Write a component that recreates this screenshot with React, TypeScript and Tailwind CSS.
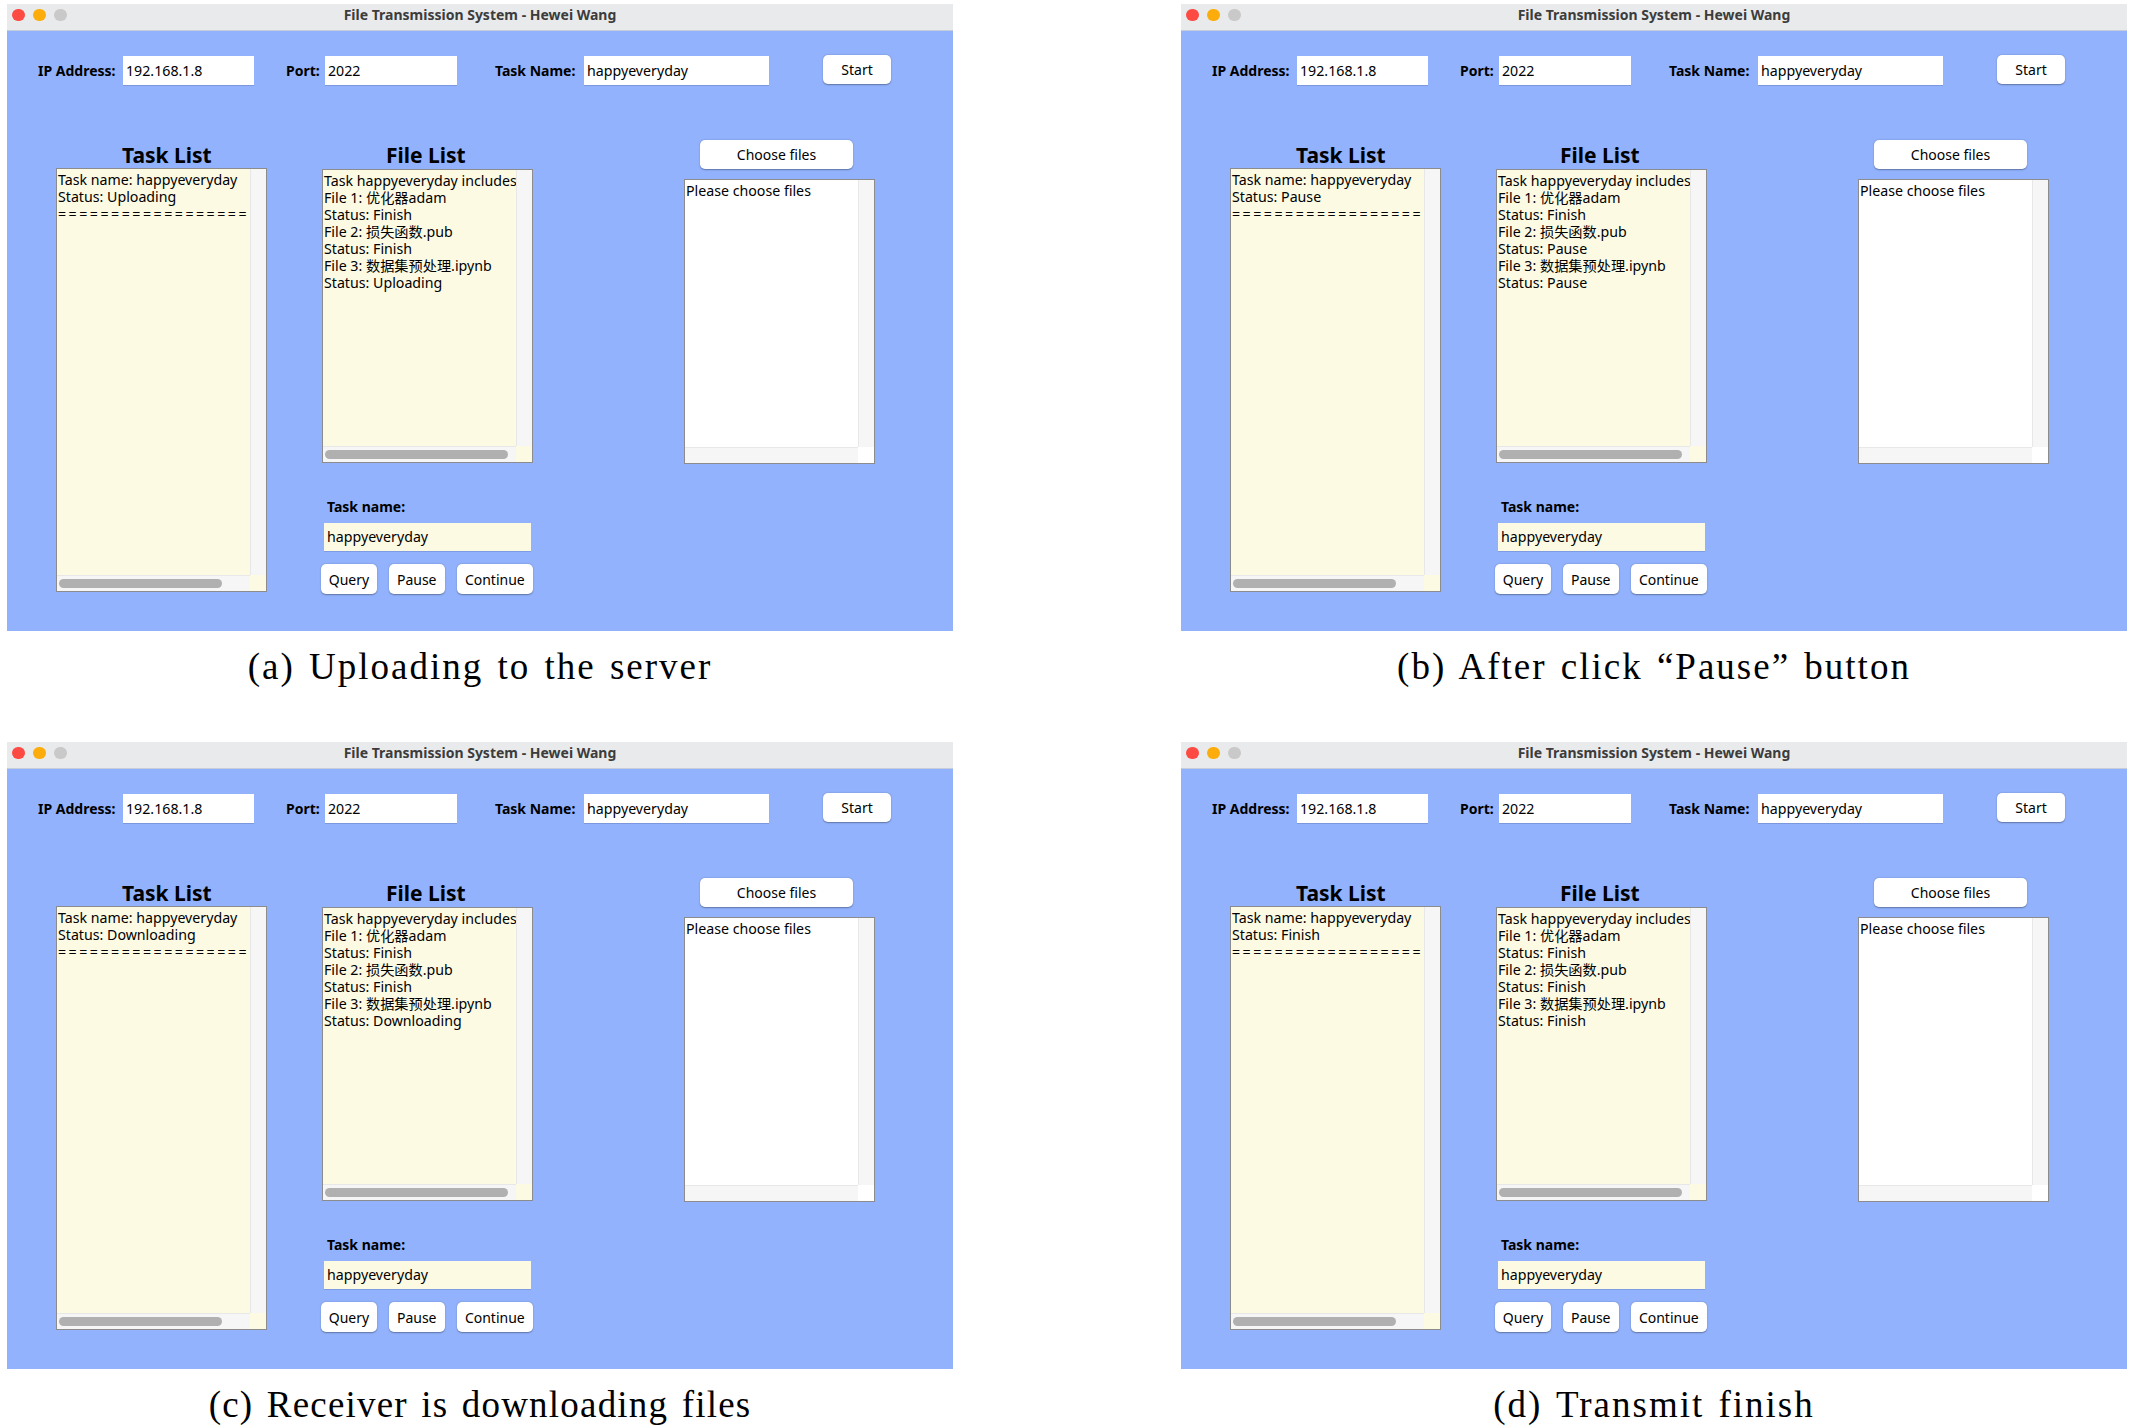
import React from "react";

interface Panel {
  task: string;
  files: [string, string, string];
  caption: string;
  capClass: string;
}

const panels: Panel[] = [
  { task: "Uploading", files: ["Finish", "Finish", "Uploading"], caption: "(a) Uploading to the server", capClass: "tracking-[2px]" },
  { task: "Pause", files: ["Finish", "Pause", "Pause"], caption: "(b) After click \u201cPause\u201d button", capClass: "tracking-[2px]" },
  { task: "Downloading", files: ["Finish", "Finish", "Downloading"], caption: "(c) Receiver is downloading files", capClass: "tracking-[1.2px]" },
  { task: "Finish", files: ["Finish", "Finish", "Finish"], caption: "(d) Transmit finish", capClass: "tracking-[2px]" },
];

function Btn({ className, children }: { className: string; children: React.ReactNode }) {
  return (
    <div
      className={
        "flex items-center justify-center bg-white rounded-[5px] text-[14px] text-black shadow-[0_0.5px_1.5px_rgba(0,0,0,0.35)] whitespace-nowrap " +
        className
      }
    >
      {children}
    </div>
  );
}

function ScrollBox({
  className,
  cornerClass,
  thumbClass,
  children,
}: {
  className: string;
  cornerClass: string;
  thumbClass?: string;
  children?: React.ReactNode;
}) {
  return (
    <div className={"flex flex-col border border-[#8c8c8c] " + className}>
      <div className="flex flex-1 min-h-0">
        <div className="flex-1 min-w-0 overflow-hidden pl-[1px] pt-[2px] text-[14.2px] leading-[17px] text-black whitespace-nowrap">
          {children}
        </div>
        <div className="w-[16px] bg-[#f6f6f6] border-l border-[#e8e8e8]" />
      </div>
      <div className="flex h-[16px]">
        <div className="flex-1 flex items-center px-[2px] bg-[#f6f6f6] border-t border-[#e8e8e8]">
          {thumbClass ? <div className={"h-[9px] rounded-full bg-[#b0b0b0] " + thumbClass} /> : null}
        </div>
        <div className={"w-[16px] " + cornerClass} />
      </div>
    </div>
  );
}

function Window({ p }: { p: Panel }) {
  return (
    <div className="flex flex-col w-[946px] h-[627px] bg-[#92b2fd] text-black font-['Noto_Sans','Noto_Sans_CJK_SC',sans-serif]">
      {/* title bar */}
      <div className="grid grid-cols-[1fr_auto_1fr] items-center h-[27px] pb-[4px] bg-[#e9eaeb] border-b border-[#c5cdda]">
        <div className="flex gap-[8.5px] pl-[5px]">
          <span className="w-[12.5px] h-[12.5px] rounded-full bg-[#fd4a43]" />
          <span className="w-[12.5px] h-[12.5px] rounded-full bg-[#fdad0b]" />
          <span className="w-[12.5px] h-[12.5px] rounded-full bg-[#c9c9c9]" />
        </div>
        <div className="text-[14px] leading-[16px] font-bold text-[#3c3c3c] whitespace-nowrap">
          File Transmission System - Hewei Wang
        </div>
        <div />
      </div>

      {/* top row */}
      <div className="flex items-start h-[30px] mt-[24px] pl-[31px]">
        <div className="w-[85px] h-[30px] flex items-center text-[14px] font-bold whitespace-nowrap">IP Address:</div>
        <div className="mt-[1px] w-[131px] h-[29px] bg-white flex items-center pl-[3px] text-[14.2px] shadow-[0_1px_0_rgba(70,90,150,0.3)]">
          192.168.1.8
        </div>
        <div className="ml-[32px] w-[39px] h-[30px] flex items-center text-[14px] font-bold whitespace-nowrap">Port:</div>
        <div className="mt-[1px] w-[132px] h-[29px] bg-white flex items-center pl-[3px] text-[14.2px] shadow-[0_1px_0_rgba(70,90,150,0.3)]">
          2022
        </div>
        <div className="ml-[38px] w-[89px] h-[30px] flex items-center text-[14px] font-bold whitespace-nowrap">Task Name:</div>
        <div className="mt-[1px] w-[185px] h-[29px] bg-white flex items-center pl-[3px] text-[14.2px] shadow-[0_1px_0_rgba(70,90,150,0.3)]">
          happyeveryday
        </div>
        <Btn className="ml-[54px] w-[68px] h-[29px]">Start</Btn>
      </div>

      {/* middle */}
      <div className="flex items-start mt-[55px]">
        {/* Task list column */}
        <div className="ml-[49px] flex flex-col w-[211px]">
          <div className="mt-[3px] h-[25px] leading-[25px] pl-[66px] text-[21px] font-bold whitespace-nowrap">Task List</div>
          <ScrollBox className="w-[211px] h-[424px] bg-[#fdfae4]" cornerClass="bg-[#fdfae4]" thumbClass="w-[163px]">
            <div>Task name: happyeveryday</div>
            <div>Status: {p.task}</div>
            <div className="tracking-[2.5px]">==================</div>
          </ScrollBox>
        </div>

        {/* File list column */}
        <div className="ml-[55px] flex flex-col w-[211px]">
          <div className="mt-[3px] h-[25px] leading-[25px] pl-[64px] text-[21px] font-bold whitespace-nowrap">File List</div>
          <ScrollBox className="mt-[1px] w-[211px] h-[294px] bg-[#fdfae4]" cornerClass="bg-[#fdfae4]" thumbClass="w-[183px]">
            <div>Task happyeveryday includes</div>
            <div>File 1: 优化器adam</div>
            <div>Status: {p.files[0]}</div>
            <div>File 2: 损失函数.pub</div>
            <div>Status: {p.files[1]}</div>
            <div>File 3: 数据集预处理.ipynb</div>
            <div>Status: {p.files[2]}</div>
          </ScrollBox>
          <div className="mt-[35px] h-[18px] leading-[18px] pl-[5px] text-[14px] font-bold whitespace-nowrap">Task name:</div>
          <div className="mt-[7px] ml-[2px] w-[207px] h-[28px] bg-[#fdfae4] flex items-center pl-[3px] text-[14.2px] shadow-[0_1px_0_rgba(70,90,150,0.25)]">
            happyeveryday
          </div>
          <div className="mt-[13px] -ml-[1px] flex gap-[12px]">
            <Btn className="w-[57px] h-[30px]">Query</Btn>
            <Btn className="w-[57px] h-[30px]">Pause</Btn>
            <Btn className="w-[78px] h-[30px]">Continue</Btn>
          </div>
        </div>

        {/* chooser column */}
        <div className="ml-[151px] flex flex-col w-[191px]">
          <Btn className="ml-[16px] w-[153px] h-[29px]">Choose files</Btn>
          <ScrollBox className="mt-[10px] w-[191px] h-[285px] bg-white" cornerClass="bg-white">
            <div>Please choose files</div>
          </ScrollBox>
        </div>
      </div>
    </div>
  );
}

export default function App() {
  return (
    <div className="w-[2138px] h-[1428px] bg-white pt-[4px] pl-[7px] overflow-hidden">
      <div className="grid grid-cols-[946px_946px] gap-x-[228px] gap-y-[53px]">
        {panels.map((p) => (
          <div key={p.caption} className="flex flex-col">
            <Window p={p} />
            <div
              className={
                "mt-[14px] h-[44px] leading-[44px] text-center text-[37px] [word-spacing:3px] text-black whitespace-nowrap font-['Liberation_Serif','Times_New_Roman',serif] " +
                p.capClass
              }
            >
              {p.caption}
            </div>
          </div>
        ))}
      </div>
    </div>
  );
}
